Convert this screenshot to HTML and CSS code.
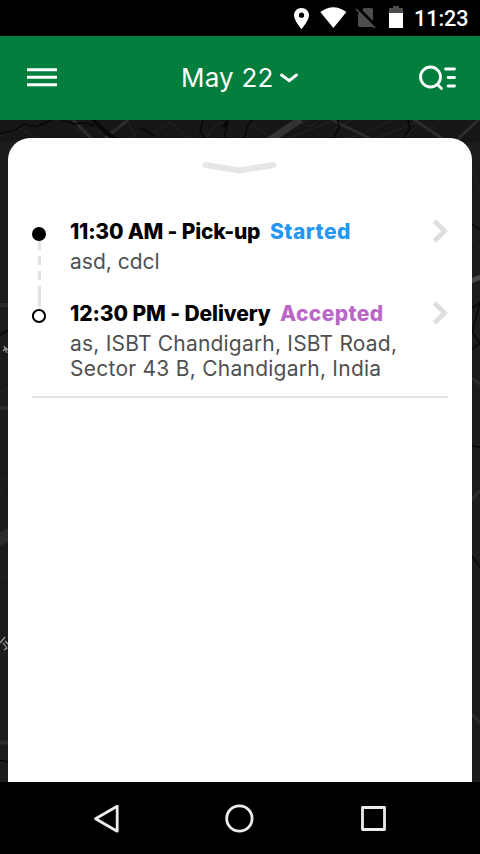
FILE: index.html
```html
<!DOCTYPE html>
<html lang="en">
<head>
<meta charset="utf-8">
<title>Schedule</title>
<link rel="stylesheet" href="styles.css">
</head>
<body>
<div class="screen">
  <div class="statusbar">
    <svg class="status-icons" width="112" height="36" viewBox="292 0 112 36">
      <path fill="#fff" fill-rule="evenodd" d="M301.500 8C297.200 8 294 11.200 294 15.200C294 20.600 301.500 29 301.500 29S309 20.600 309 15.200C309 11.200 305.800 8 301.500 8ZM301.500 12.600A2.600 2.600 0 1 1 301.500 17.800A2.600 2.600 0 1 1 301.500 12.600Z"/>
      <path fill="#fff" d="M320.300 12Q333.300 2.400 346.400 12L333.400 28Z"/>
      <path fill="#4d4d4d" d="M364 8H371Q373 8 373 10V27H360Q358 27 358 25V14Z"/>
      <path stroke="#000" stroke-width="3" d="M357 7L376 26"/>
      <path stroke="#4d4d4d" stroke-width="1.700" d="M356 9L375 28"/>
      <path fill="#4d4d4d" d="M393 6H399V8H403V14H389V8H393Z"/>
      <path fill="#fff" d="M389 13H403V28H389Z"/>
    </svg>
    <span class="clock">11:23</span>
  </div>
  <header class="appbar">
    <svg class="menu" width="30" height="20" viewBox="0 0 30 20"><path stroke="#fff" stroke-width="3" d="M0 1.700H30M0 9.200H30M0 16.700H30"/></svg>
    <div class="date"><span class="date-label">May 22</span>
      <svg width="20" height="12" viewBox="0 0 20 12"><path d="M2.500 3L10.200 8.600L17.500 3" fill="none" stroke="#fff" stroke-width="2.900" stroke-linecap="round"/></svg>
    </div>
    <svg class="search" width="38" height="26" viewBox="0 0 38 26" fill="none" stroke="#fff" stroke-width="2.800" stroke-linecap="round"><circle cx="11.500" cy="12" r="10"/><path d="M18.500 19.500L22.500 23.500M26.500 4H35.500M29 12.500H35.500M29 21H35.500"/></svg>
  </header>
  <main class="content">
    <svg class="map" width="480" height="662" viewBox="0 120 480 662" fill="none">
      <rect y="120" width="480" height="662" fill="#1c1c1c"/>
      <rect y="120" width="480" height="22" fill="#161616"/>
      <g stroke="#242424">
        <path d="M0 136L18 127L42 141M64 120L90 138M127 120L137 140M160 130L170 122L190 139M205 139L216 125L230 120M238 139L252 124L270 138M278 133L309 120M286 139L330 122M300 120Q308 133 320 120M334 129L352 120M350 138L394 120M376 138L418 122M404 138L423 120M420 135L442 120"/>
        <path d="M472 170L480 190M472 206L480 213M472 240L480 248M472 365L480 360M472 426L480 415M472 478L480 484M472 540L480 535M472 590L480 600M472 685L480 691M0 392L8 388M0 480L8 477M0 500Q-1 490 8 481M0 505L8 511M0 575L8 579M0 610L8 606M0 660L8 652M0 678L8 668M0 694L8 684M0 714Q12 726 0 734"/>
      </g>
      <g stroke="#2b2c2b" stroke-width="3">
        <path d="M73 120L91 138M128 120L105 138"/>
        <path d="M301 119L270 140" stroke="#313431" stroke-width="7"/>
        <path d="M332 120L371 139M413 119L443 139M479 119L457 140"/>
        <path d="M0 305H8M0 408H8M0 743L8 742" stroke-width="4"/><path d="M471 281L481 277" stroke="#484b48" stroke-width="5"/>
        <path d="M472 378L481 385M472 500L480 490M472 714L481 724"/>
      </g>
      <g stroke="#070707" stroke-width="1.500">
        <path d="M0 134L15 130L24 124L36 127L52 120M62 120L73 124L87 123L94 126M140 128L155 136M203 120L200 131L205 139M224 139L228 120M252 119L247 128L244 139M338 120L339 128L333 138M408 120L410 129L403 138"/>
        <path d="M93 120L108 134L116 139M228 121L224 127" stroke-width="4"/>
        <path d="M472 224L480 230M472 308L480 303L472 332L480 343L472 349M472 446L480 447M472 556L480 567M0 335L8 330M0 760L8 762"/>
      </g>
      <path stroke="#a0a0a0" stroke-width="1.200" d="M3 351L6 348L8 350M4 346L7 353M0 643L5 637M5 641L8 644M3 643L7 648L4 650"/>
      <path d="M0 532L8 528V542L0 546Z" fill="#292c2a"/>
    </svg>
    <section class="sheet">
      <svg class="handle" width="76" height="14" viewBox="0 0 76 14"><path d="M3.500 4L37.500 9.500L71.500 4" fill="none" stroke="#e6e6e6" stroke-width="6" stroke-linecap="round" stroke-linejoin="round"/></svg>
      <div class="stops">
        <svg class="track" width="16" height="104" viewBox="0 0 16 104">
          <path d="M7.500 18V28M7.500 34V43M7.500 49V58M7.500 64V84" stroke="#e3e3e3" stroke-width="3"/>
          <path d="M7.500 84V88" stroke="#eee" stroke-width="3"/>
          <circle cx="7" cy="12" r="7"/>
          <circle cx="7" cy="94" r="6.100" fill="#fff" stroke="#000" stroke-width="2"/>
        </svg>
        <div class="list">
          <article class="stop">
            <div class="heading"><strong class="title pickup">11:30 AM - Pick-up</strong><span class="state started">Started</span></div>
            <p class="address"><span class="line first">asd, cdcl</span></p>
          </article>
          <article class="stop">
            <div class="heading"><strong class="title delivery">12:30 PM - Delivery</strong><span class="state accepted">Accepted</span></div>
            <p class="address"><span class="line second">as, ISBT Chandigarh, ISBT Road,</span><span class="line third">Sector 43 B, Chandigarh, India</span></p>
          </article>
        </div>
        <div class="arrows">
          <svg width="16" height="24" viewBox="0 0 16 24"><path d="M2.500 2L12.500 12L2.500 22" fill="none" stroke="#dedede" stroke-width="4.800"/></svg>
          <svg width="16" height="24" viewBox="0 0 16 24"><path d="M2.500 2L12.500 12L2.500 22" fill="none" stroke="#dedede" stroke-width="4.800"/></svg>
        </div>
      </div>
    </section>
  </main>
  <nav class="navbar">
    <svg width="320" height="72" viewBox="80 782 320 72" fill="none" stroke="#ececec" stroke-width="2.800" stroke-linejoin="round"><path d="M117.200 806.300V831.200L95.500 818.700Z"/><circle cx="239.400" cy="818.500" r="12.700"/><path d="M362.500 807.500H384.500V829.500H362.500Z"/></svg>
  </nav>
</div>
</body>
</html>
```
FILE: styles.css
```css
* { box-sizing: border-box; }
body { margin: 0; font-family: Inter, "Liberation Sans", sans-serif; }
svg { display: block; flex: none; }
.screen { width: 480px; height: 854px; display: flex; flex-direction: column; overflow: hidden; background: #000; }
.statusbar { height: 36px; display: flex; justify-content: flex-end; align-items: center; gap: 10px; padding-right: 12px; background: #000; }
.clock { width: 54px; padding-top: 1px; font: 500 21.5px/36px Roboto, sans-serif; color: #fff; white-space: nowrap; }
.appbar { height: 84px; display: flex; align-items: center; justify-content: space-between; padding: 0 23px 0 27px; background: #027e3d; }
.date { display: flex; align-items: center; gap: 5px; color: #fff; margin-left: 4px; }
.date-label { width: 93px; font-size: 26px; line-height: 34px; letter-spacing: .2px; white-space: nowrap; }
.content { position: relative; height: 662px; padding: 18px 8px 0; }
.map { position: absolute; top: 0; left: 0; }
.sheet { position: relative; height: 644px; background: #fff; border-radius: 22px 22px 0 0; padding: 23px 24px 0; }
.handle { margin: 0 auto; }
.stops { height: 223px; display: flex; padding-top: 47px; border-bottom: 2px solid #e3e3e3; }
.track { margin-right: 22px; }
.list { width: 345px; margin-top: -4px; }
.stop { height: 82px; }
.heading { display: flex; gap: 9px; font-size: 21px; line-height: 28px; font-weight: 800; white-space: nowrap; }
.title { font-weight: 800; }
.pickup { width: 191px; letter-spacing: -.2px; }
.delivery { width: 201px; letter-spacing: -.1px; }
.started { color: #2497f3; letter-spacing: .5px; }
.accepted { color: #ba68c8; letter-spacing: .4px; }
.address { margin: 3px 0 0; font-size: 21px; line-height: 25px; color: #505050; white-space: nowrap; }
.line { display: block; }
.second { letter-spacing: .2px; }
.third { letter-spacing: .25px; }
.arrows { display: flex; flex-direction: column; gap: 58px; margin-top: -3px; margin-left: 17px; }
.navbar { height: 72px; display: flex; justify-content: center; background: #000; }
```
